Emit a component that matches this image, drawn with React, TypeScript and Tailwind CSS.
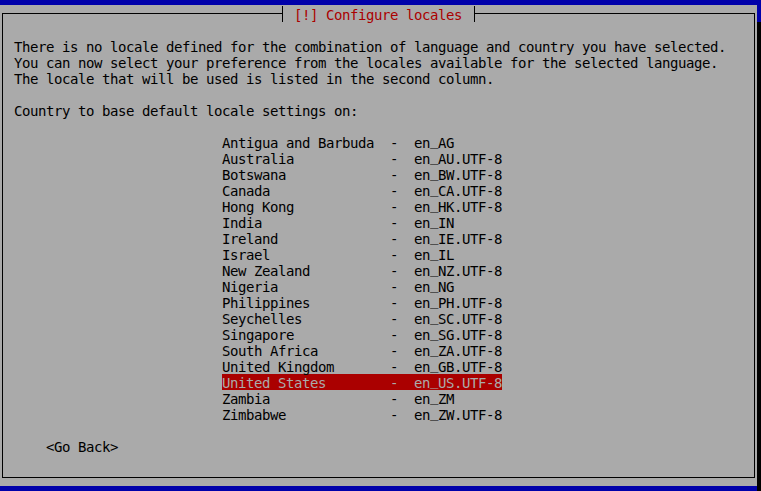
const locales: [string, string][] = [
  ['Antigua and Barbuda', 'en_AG'],
  ['Australia', 'en_AU.UTF-8'],
  ['Botswana', 'en_BW.UTF-8'],
  ['Canada', 'en_CA.UTF-8'],
  ['Hong Kong', 'en_HK.UTF-8'],
  ['India', 'en_IN'],
  ['Ireland', 'en_IE.UTF-8'],
  ['Israel', 'en_IL'],
  ['New Zealand', 'en_NZ.UTF-8'],
  ['Nigeria', 'en_NG'],
  ['Philippines', 'en_PH.UTF-8'],
  ['Seychelles', 'en_SC.UTF-8'],
  ['Singapore', 'en_SG.UTF-8'],
  ['South Africa', 'en_ZA.UTF-8'],
  ['United Kingdom', 'en_GB.UTF-8'],
  ['United States', 'en_US.UTF-8'],
  ['Zambia', 'en_ZM'],
  ['Zimbabwe', 'en_ZW.UTF-8'],
];

const selected = 'United States';

// the console font draws "_" right under the baseline, DejaVu drops it lower
function Locale({ code }: { code: string }) {
  const [lang, rest] = code.split('_');
  return (
    <span className="relative top-px">
      {lang}
      <span className="relative -top-[3px]">_</span>
      {rest}
    </span>
  );
}

function LocaleRow({ country, locale }: { country: string; locale: string }) {
  const active = country === selected;
  return (
    <div
      className={`flex h-4 w-[280px] whitespace-pre ${
        active ? 'bg-[#aa0000] text-[#aaaaaa]' : 'text-black'
      }`}
    >
      <span className="relative top-px w-[168px]">{country}</span>
      <span className="relative top-px w-[24px]">-</span>
      <Locale code={locale} />
    </div>
  );
}

export default function App() {
  return (
    <div
      className="h-[491px] w-[761px] overflow-hidden bg-[#0000aa] pt-[5px] text-[14px] leading-4 tracking-[-0.43px]"
      style={{ fontFamily: '"DejaVu Sans Mono", "Liberation Mono", monospace' }}
    >
      <div className="flex">
        <div className="h-[481px] w-[757px] bg-[#aaaaaa] pt-[8px] pl-[2px]">
          <div className="relative h-[465px] w-[753px] border border-black">
            <div className="absolute top-[-8px] left-[279px] flex h-4 w-[193px] border-x border-black bg-[#aaaaaa] pl-[11px] text-[#aa0000] whitespace-pre">
              <span className="relative top-px">[!] Configure locales</span>
            </div>

            <div className="pt-[24px] pl-[11px] text-black whitespace-pre">
              <p className="relative top-px">
                There is no locale defined for the combination of language and country you have selected.
              </p>
              <p className="relative top-px">
                You can now select your preference from the locales available for the selected language.
              </p>
              <p className="relative top-px">The locale that will be used is listed in the second column.</p>
              <p className="relative top-px mt-4">Country to base default locale settings on:</p>

              <div className="mt-4 ml-[208px]">
                {locales.map(([country, locale]) => (
                  <LocaleRow key={country} country={country} locale={locale} />
                ))}
              </div>

              <p className="relative top-px mt-4 ml-[32px]">&lt;Go Back&gt;</p>
            </div>
          </div>
        </div>
        <div className="mt-[17px] h-[470px] w-[4px] bg-black" />
      </div>
      <div className="ml-[6px] h-[5px] bg-black" />
    </div>
  );
}
